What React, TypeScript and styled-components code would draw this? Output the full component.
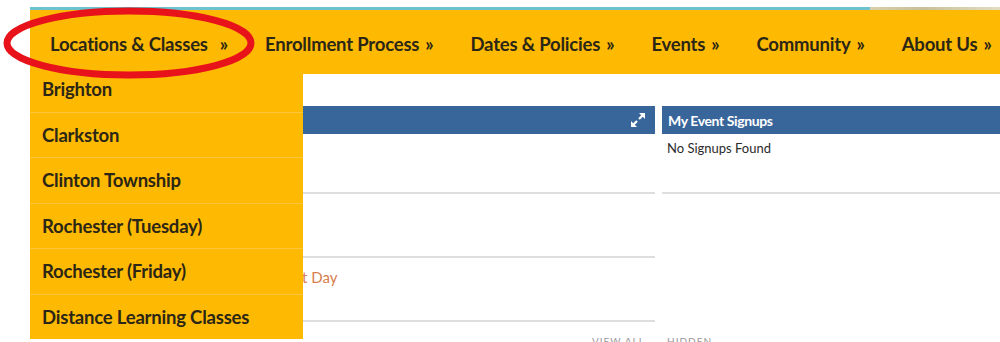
import styled, { createGlobalStyle } from 'styled-components';

const colors = {
    yellow: '#FEB902',
    yellowLine: '#FDC53A',
    text: '#2B2616',
    blue: '#38659A',
    teal: '#6CC2CF',
    grayLine: '#DEDEDE',
    orange: '#D97D4E',
    red: '#E8121A',
};

const GlobalStyle = createGlobalStyle`
    html, body {
        margin: 0;
        padding: 0;
        background: #fff;
        width: 1000px;
        height: 342px;
        overflow: hidden;
    }
    body {
        font-family: Lato, "Open Sans", sans-serif;
    }
`;

const Page = styled('div')`
    position: relative;
    width: 1000px;
    height: 342px;
    overflow: hidden;
    padding-top: 7px;
    box-sizing: border-box;
`;

const TopStrip = styled('div')`
    margin-left: 30px;
    height: 3px;
    display: flex;
`;

const TealLine = styled('div')`
    flex: 0 0 840px;
    background: ${colors.teal};
`;

const BannerEdge = styled('div')`
    flex: 1;
    background: linear-gradient(90deg, #d9cfa8, #c9bf9a 40%, #e4dcc0);
`;

const NavBar = styled('nav')`
    margin-left: 30px;
    height: 64px;
    background: ${colors.yellow};
    display: flex;
    align-items: center;
    gap: 37px;
    padding-left: 20px;
    white-space: nowrap;
`;

const NavItem = styled('div')`
    font-family: Lato, sans-serif;
    font-weight: 700;
    font-size: 18.5px;
    color: ${colors.text};
    letter-spacing: -0.2px;
    padding-top: 4px;
`;

const Chevrons = styled('span')<{ wide?: boolean }>`
    margin-left: ${(props) => (props.wide ? '12px' : '6px')};
`;

const Content = styled('div')`
    display: grid;
    grid-template-columns: 625px 360px;
    column-gap: 7px;
    margin-left: 30px;
    padding-top: 32px;
`;

const Panel = styled('section')`
    display: flex;
    flex-direction: column;
`;

const PanelHeader = styled('div')`
    height: 28px;
    background: ${colors.blue};
    color: #fff;
    font-family: Lato, sans-serif;
    font-weight: 700;
    font-size: 14px;
    letter-spacing: -0.4px;
    display: flex;
    align-items: center;
    justify-content: space-between;
    padding: 0 9px 0 6px;
`;

const Row = styled('div')<{ h: number }>`
    height: ${(props) => props.h}px;
    border-bottom: 2px solid ${colors.grayLine};
    box-sizing: border-box;
    font-size: 13px;
    color: #333;
`;

const EmptyText = styled('div')`
    padding: 6px 0 0 5px;
    font-size: 13px;
    color: #2b2b2b;
`;

const EventLine = styled('div')`
    padding: 10px 0 0 248px;
`;

const EventTitle = styled('span')`
    color: ${colors.orange};
    font-size: 15px;
`;

const Footer = styled('div')`
    display: grid;
    grid-template-columns: 75px 75px;
    padding: 13px 0 0 592px;
    font-size: 10px;
    color: #999;
    letter-spacing: 1px;
`;

const Dropdown = styled('ul')`
    position: absolute;
    left: 30px;
    top: 66px;
    width: 273px;
    margin: 0;
    padding: 0;
    list-style: none;
    background: ${colors.yellow};
`;

const DropdownItem = styled('li')`
    height: 45.5px;
    box-sizing: border-box;
    padding: 0 12px;
    display: flex;
    align-items: center;
    font-family: Lato, sans-serif;
    font-weight: 700;
    font-size: 18.5px;
    letter-spacing: -0.2px;
    color: ${colors.text};
    border-top: 1px solid ${colors.yellowLine};
    &:first-child {
        border-top: none;
    }
`;

const Annotation = styled('svg')`
    position: absolute;
    left: 0;
    top: 0;
    pointer-events: none;
`;

const ExpandIcon = () => (
    <svg width="16" height="16" viewBox="0 0 16 16" fill="#fff">
        <path d="M9 1h6v6l-2.2-2.2-3 3-1.6-1.6 3-3z" />
        <path d="M7 15H1V9l2.2 2.2 3-3 1.6 1.6-3 3z" />
    </svg>
);

const navItems = ['Enrollment Process', 'Dates & Policies', 'Events', 'Community', 'About Us'];
const locations = [
    'Brighton',
    'Clarkston',
    'Clinton Township',
    'Rochester (Tuesday)',
    'Rochester (Friday)',
    'Distance Learning Classes',
];

export default function App() {
    return (
        <Page>
            <GlobalStyle />
            <TopStrip>
                <TealLine />
                <BannerEdge />
            </TopStrip>
            <NavBar>
                <NavItem>
                    Locations &amp; Classes<Chevrons wide>»</Chevrons>
                </NavItem>
                {navItems.map((item) => (
                    <NavItem key={item}>
                        {item}
                        <Chevrons>»</Chevrons>
                    </NavItem>
                ))}
            </NavBar>
            <Content>
                <Panel>
                    <PanelHeader>
                        <span />
                        <ExpandIcon />
                    </PanelHeader>
                    <Row h={60} />
                    <Row h={64} />
                    <Row h={64}>
                        <EventLine>
                            <EventTitle>First Day</EventTitle>
                        </EventLine>
                    </Row>
                </Panel>
                <Panel>
                    <PanelHeader>
                        <span>My Event Signups</span>
                    </PanelHeader>
                    <Row h={60}>
                        <EmptyText>No Signups Found</EmptyText>
                    </Row>
                </Panel>
            </Content>
            <Footer>
                <span>VIEW ALL</span>
                <span>HIDDEN</span>
            </Footer>
            <Dropdown>
                {locations.map((loc) => (
                    <DropdownItem key={loc}>{loc}</DropdownItem>
                ))}
            </Dropdown>
            <Annotation width="1000" height="342">
                <ellipse cx="129" cy="43" rx="122" ry="32" fill="none" stroke={colors.red} strokeWidth="7" />
            </Annotation>
        </Page>
    );
}
